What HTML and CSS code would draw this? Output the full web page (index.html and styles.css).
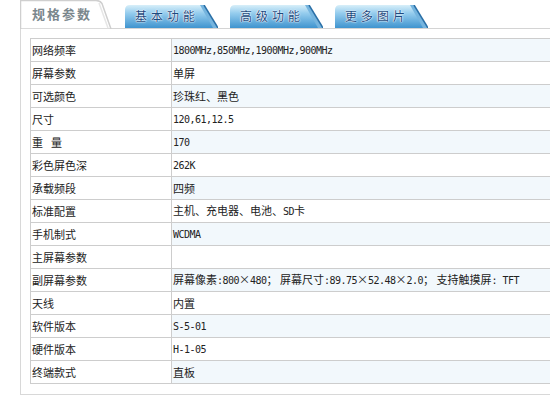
FILE: index.html
```html
<!DOCTYPE html>
<html lang="zh">
<head>
<meta charset="utf-8">
<title>规格参数</title>
<link rel="stylesheet" href="styles.css">
</head>
<body>
<div class="wrap">
  <div class="tabs">
    <div class="tab tab-active">规格参数</div>
    <div class="tab tab-blue">基本功能</div>
    <div class="tab tab-blue">高级功能</div>
    <div class="tab tab-blue">更多图片</div>
  </div>
  <div class="panel">
    <table class="spec">
      <tr class="odd"><td class="k">网络频率</td><td class="v"><span class="en">1800MHz,850MHz,1900MHz,900MHz</span></td></tr>
      <tr><td class="k">屏幕参数</td><td class="v">单屏</td></tr>
      <tr class="odd"><td class="k">可选颜色</td><td class="v">珍珠红、黑色</td></tr>
      <tr><td class="k">尺寸</td><td class="v"><span class="en">120,61,12.5</span></td></tr>
      <tr class="odd"><td class="k">重<span class="sp"></span>量</td><td class="v"><span class="en">170</span></td></tr>
      <tr><td class="k">彩色屏色深</td><td class="v"><span class="en">262K</span></td></tr>
      <tr class="odd"><td class="k">承载频段</td><td class="v">四频</td></tr>
      <tr><td class="k">标准配置</td><td class="v">主机、充电器、电池、<span class="en">SD</span>卡</td></tr>
      <tr class="odd"><td class="k">手机制式</td><td class="v"><span class="en">WCDMA</span></td></tr>
      <tr><td class="k">主屏幕参数</td><td class="v"></td></tr>
      <tr class="odd"><td class="k">副屏幕参数</td><td class="v">屏幕像素<span class="en">:800</span>×<span class="en">480</span>；&nbsp;屏幕尺寸<span class="en">:89.75</span>×<span class="en">52.48</span>×<span class="en">2.0</span>；&nbsp;支持触摸屏<span class="en">: TFT</span></td></tr>
      <tr><td class="k">天线</td><td class="v">内置</td></tr>
      <tr class="odd"><td class="k">软件版本</td><td class="v"><span class="en">S-5-01</span></td></tr>
      <tr><td class="k">硬件版本</td><td class="v"><span class="en">H-1-05</span></td></tr>
      <tr class="odd"><td class="k">终端款式</td><td class="v">直板</td></tr>
    </table>
  </div>
</div>
</body>
</html>
```

FILE: styles.css
```css
html, body {
  margin: 0;
  padding: 0;
  background: #ffffff;
  overflow: hidden;
}
body {
  font-family: "Noto Sans CJK SC", "Noto Sans", sans-serif;
  color: #222;
}
.wrap {
  margin-left: 20px;
  width: 530px;
}
.tabs {
  display: flex;
  align-items: flex-start;
  height: 28px;
  border-bottom: 1px solid #d4d4d4;
}
.tab {
  box-sizing: border-box;
  white-space: nowrap;
  flex: none;
}
.tab-active {
  width: 92px;
  height: 29px;
  padding: 4px 0 0 12px;
  font-size: 13px;
  line-height: 20px;
  font-weight: bold;
  letter-spacing: 2px;
  color: #7a878d;
  background-image: url("data:image/svg+xml;utf8,<svg xmlns='http://www.w3.org/2000/svg' width='92' height='29'><path d='M0.5 29V0.5H76Q80 0.5 82 3.5L91 29Z' fill='white' stroke='%23cfcfcf' stroke-width='1.5'/><path d='M79 3L88 28' stroke='%23e6e6e6' stroke-width='1.5' fill='none'/></svg>");
  background-repeat: no-repeat;
}
.tab-blue {
  width: 93px;
  height: 23px;
  margin-top: 5px;
  padding: 3px 0 0 10px;
  font-size: 12px;
  line-height: 16px;
  letter-spacing: 4px;
  color: #1c4a80;
  text-shadow: 0 0 2px #fff, 0 0 1px #fff, 0 0 1px #fff;
  background-image: url("data:image/svg+xml;utf8,<svg xmlns='http://www.w3.org/2000/svg' width='93' height='23'><defs><linearGradient id='g' x1='0' y1='0' x2='0' y2='1'><stop offset='0' stop-color='%23d8eff9'/><stop offset='0.35' stop-color='%2396cdee'/><stop offset='1' stop-color='%233f94cf'/></linearGradient></defs><path d='M0 23V5Q0 0 5 0H79L93 23Z' fill='url(%23g)'/><path d='M75 0H79L93 23H88Z' fill='%2375b4de'/><path d='M79 0L93 23' stroke='%232a6fa6' stroke-width='1.5'/></svg>");
  background-repeat: no-repeat;
}
.tab-blue + .tab-blue {
  margin-left: 12px;
}
.tab-active + .tab-blue {
  margin-left: 13px;
}
.panel {
  border-left: 1px solid #d8d8d8;
  border-bottom: 1px solid #d8d8d8;
  padding: 9px 0 10px 9px;
}
.spec {
  border-collapse: collapse;
  width: 520px;
  font-size: 11px;
}
.spec td {
  border: 1px solid #cdcdcd;
  height: 22px;
  padding: 0 1px;
  line-height: 14px;
  vertical-align: middle;
  white-space: nowrap;
}
.spec td.k {
  width: 138px;
}
.spec td.v {
  border-right: 0;
}
.spec tr.odd td.v {
  background: #f2f8fc;
}
.en {
  font-family: "DejaVu Sans Mono", monospace;
  font-size: 10px;
  letter-spacing: -0.52px;
}
.sp {
  display: inline-block;
  width: 8px;
}
```
